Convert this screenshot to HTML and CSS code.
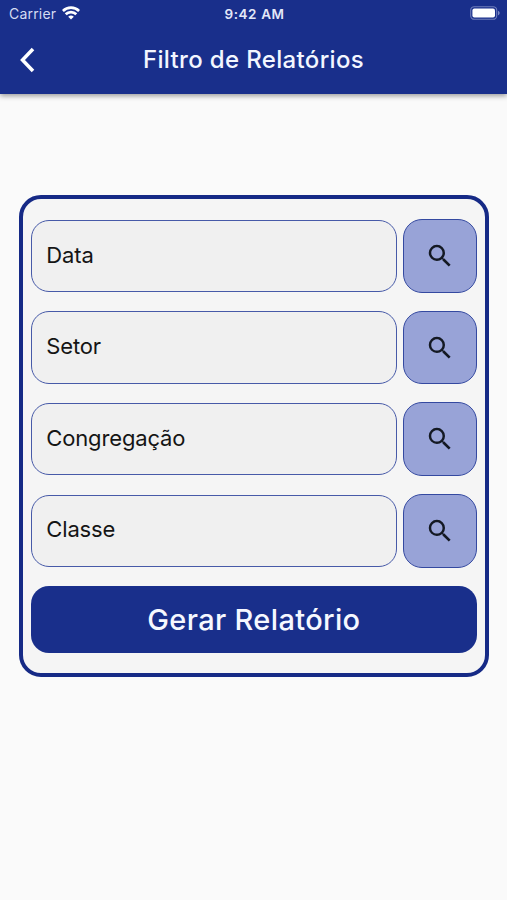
FILE: index.html
```html
<!DOCTYPE html>
<html lang="pt-BR">
<head>
<meta charset="utf-8">
<meta name="viewport" content="width=device-width, initial-scale=1">
<title>Filtro de Relatórios</title>
<link rel="stylesheet" href="styles.css">
</head>
<body>
<svg class="symbols" aria-hidden="true">
  <symbol id="search" viewBox="0 0 24 24"><path d="M15.5 14h-.79l-.28-.27A6.47 6.47 0 0 0 16 9.5 6.5 6.5 0 1 0 9.5 16c1.61 0 3.09-.59 4.23-1.57l.27.28v.79l5 4.99L20.49 19l-4.99-5zm-6 0C7.01 14 5 11.99 5 9.5S7.01 5 9.5 5 14 7.01 14 9.5 11.99 14 9.5 14z"/></symbol>
</svg>
<header class="app-header">
  <div class="status">
    <div class="carrier"><span>Carrier</span>
      <svg class="wifi" viewBox="0 0 18 14" fill="none" stroke="#fff" stroke-width="2.7"><path d="M.9 5a11.6 11.6 0 0 1 16.2 0M3.7 8.300a7.500 7.500 0 0 1 10.600 0"/><path d="M9 13.600 6.200 10.800a4 4 0 0 1 5.600 0z" fill="#fff" stroke="none"/></svg>
    </div>
    <span class="time">9:42 AM</span>
    <svg class="battery" viewBox="0 0 30 14"><rect x=".7" y=".7" width="26" height="12.6" rx="3.6" fill="none" stroke="#6f7dbb" stroke-width="1.1"/><rect x="2.4" y="2.4" width="22.6" height="9.2" rx="2" fill="#fff"/><path d="M28 4.7c2.2.8 2.2 3.8 0 4.6z" fill="#7d8ac4"/></svg>
  </div>
  <div class="toolbar">
    <svg class="back" viewBox="0 0 16 26"><path d="M14 2 3.500 13 14 24" fill="none" stroke="#fff" stroke-width="3.5"/></svg>
    <h1>Filtro de Relatórios</h1>
  </div>
</header>
<main class="card">
  <div class="row"><div class="field">Data</div><button class="search"><svg><use href="#search"/></svg></button></div>
  <div class="row"><div class="field">Setor</div><button class="search"><svg><use href="#search"/></svg></button></div>
  <div class="row"><div class="field">Congregação</div><button class="search"><svg><use href="#search"/></svg></button></div>
  <div class="row"><div class="field">Classe</div><button class="search"><svg><use href="#search"/></svg></button></div>
  <button class="submit">Gerar Relatório</button>
</main>
</body>
</html>
```
FILE: styles.css
```css
* { box-sizing: border-box; }
body { margin: 0; min-height: 900px; background: #fafafa; font-family: Inter, "Liberation Sans", sans-serif; color: #151515; }
button { font: inherit; padding: 0; border: 0; }
svg { display: block; flex: none; }
.symbols { display: none; }
.app-header { height: 94px; background: #192f8b; color: #fff; box-shadow: 0 2px 5px rgba(0,0,0,.38); }
.status { display: grid; grid-template-columns: 1fr auto 1fr; align-items: center; height: 27px; padding: 0 7px 0 9px; }
.carrier { display: flex; align-items: center; gap: 6px; font-size: 14px; letter-spacing: .2px; color: #d5dcf2; }
.wifi { width: 18px; height: 14px; margin-top: -1px; }
.time { font-size: 13.500px; font-weight: 600; letter-spacing: .6px; color: #e3e8f8; }
.battery { width: 30px; height: 14px; justify-self: end; margin-top: -1px; }
.toolbar { display: grid; grid-template-columns: 1fr auto 1fr; align-items: center; height: 65px; padding-left: 19px; }
.toolbar::after { content: ""; }
.back { width: 16px; height: 26px; }
h1 { margin: 0 0 0 -19px; font-size: 24px; font-weight: 500; letter-spacing: .34px; white-space: nowrap; line-height: 30px; color: #f3f6ff; }
.card { width: 469.500px; height: 482px; margin: 101px 0 0 19.300px; padding: 20.500px 8.300px 0 8px; border: 4px solid #162a86; border-radius: 22px; background: #f5f5f5; }
.row { display: flex; align-items: center; gap: 6px; height: 73px; margin-bottom: 18.600px; }
.field { display: flex; align-items: center; flex: 1; height: 72.500px; padding: 0 14px 3px; border: 1.400px solid #475aa8; border-radius: 18px; background: #f0f0f0; font-size: 22px; letter-spacing: -.15px; }
.search { display: grid; place-items: center; width: 73.500px; height: 73.500px; border: 1.400px solid #3449a0; border-radius: 19px; background: #98a3d7; }
.search svg { width: 30px; height: 30px; fill: #141923; }
.submit { display: block; width: 100%; height: 67px; border-radius: 18px; background: #192f8b; color: #f6f8ff; font-size: 29px; font-weight: 500; letter-spacing: .35px; }
```
